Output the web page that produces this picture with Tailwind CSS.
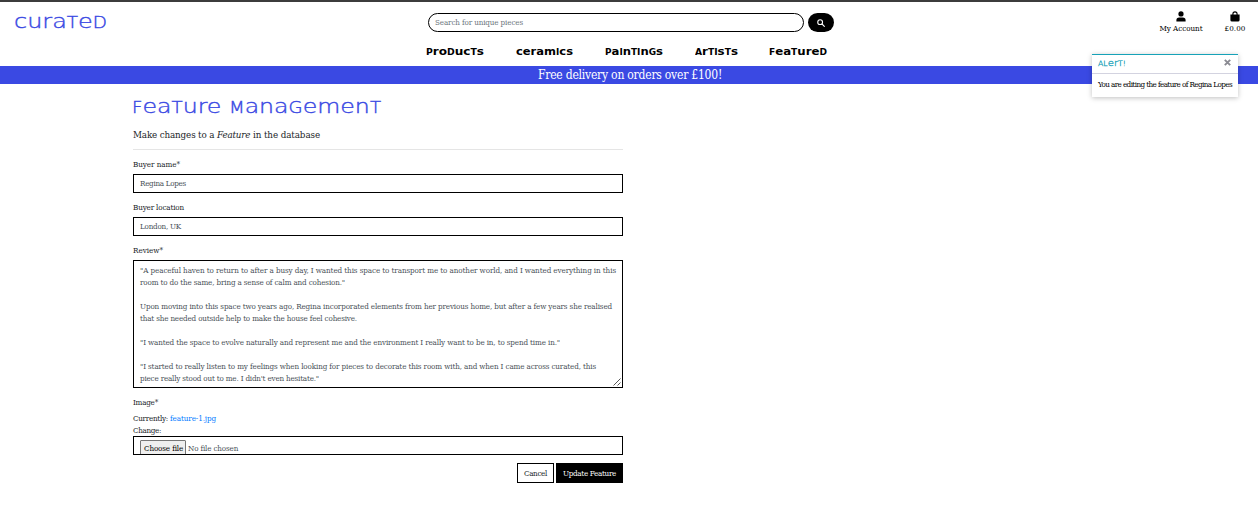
<!DOCTYPE html>
<html lang="en">
<head>
<meta charset="utf-8">
<title>curated</title>
<script src="https://cdn.jsdelivr.net/npm/@tailwindcss/browser@4"></script>
</head>
<body class="h-[510px] overflow-hidden border-t-2 border-[#3c3c3c] bg-white font-['DejaVu_Serif_Condensed','DejaVu_Serif',serif] text-[8px] leading-3 text-[#212529] [font-stretch:condensed]">
<header class="relative h-16">
  <div class="flex justify-between">
    <a class="ml-[14px] mt-[9px] h-5 w-[93px] whitespace-nowrap font-['DejaVu_Sans'] text-[20px] font-extralight leading-5 text-[#3a49e3] [-webkit-text-stroke:0.4px]"><span data-unicase data-stretch="93">curated</span></a>
    <div class="ml-[321px] mt-[11px] flex w-[406px] gap-1">
      <div class="flex h-[19px] w-[376px] items-center rounded-full border border-black pl-[6px] text-[#6c757d]"><span data-fit="88">Search for unique pieces</span></div>
      <button class="flex h-[19px] w-[26px] items-center justify-center rounded-full bg-black"><svg class="size-2" viewBox="0 0 16 16" fill="none" stroke="white" stroke-width="2.2" stroke-linecap="round"><circle cx="6.3" cy="6.3" r="4.8"/><path d="M10 10l4.7 4.7"/></svg></button>
    </div>
    <div class="ml-auto mr-[12px] mt-[9px] flex text-black">
      <a class="flex w-[44px] flex-col items-center"><svg class="h-[11px] w-[10px]" viewBox="0 0 10 11"><circle cx="5" cy="2.9" r="2.6"/><path d="M.4 10.5V9.2A2.8 2.8 0 0 1 3.2 6.4h3.6a2.8 2.8 0 0 1 2.8 2.8v1.3z"/></svg><span class="mt-px" data-fit="43">My Account</span></a>
      <a class="ml-[21px] flex w-[22px] flex-col items-center"><svg class="h-[11px] w-[10px]" viewBox="0 0 10 11"><path d="M.4 3.5h9.2v5.4a1.6 1.6 0 0 1-1.6 1.6H2A1.6 1.6 0 0 1 .4 8.900z"/><path d="M2.900 5V3a2.100 2.100 0 0 1 4.200 0v2" fill="none" stroke="black" stroke-width="1.100"/></svg><span class="mt-px" data-fit="21">£0.00</span></a>
    </div>
  </div>
  <nav class="absolute left-[426px] top-[42px] flex font-['DejaVu_Sans'] text-[10.5px] font-bold leading-[14px] text-black">
    <a class="w-[90px] whitespace-nowrap"><span data-unicase data-stretch="58">Products</span></a>
    <a class="w-[89px] whitespace-nowrap"><span data-unicase data-stretch="57">ceramics</span></a>
    <a class="w-[90px] whitespace-nowrap"><span data-unicase data-stretch="58">Paintings</span></a>
    <a class="w-[74px] whitespace-nowrap"><span data-unicase data-stretch="43">Artists</span></a>
    <a class="w-[58px] whitespace-nowrap"><span data-unicase data-stretch="58">Featured</span></a>
  </nav>
</header>
<div class="flex h-[18px] items-center justify-center bg-[#3a49e3] pl-[2px] text-[12px] text-white"><span data-fit="184">Free delivery on orders over £100!</span></div>

<main class="ml-[133px] w-[490px]">
  <h1 class="mt-3 h-5 whitespace-nowrap font-['DejaVu_Sans'] text-[20px] font-extralight leading-5 text-[#3a49e3] [-webkit-text-stroke:0.4px]"><span class="-ml-px" data-unicase data-stretch="249">Feature Management</span></h1>
  <p class="mt-3 flex h-[22px] border-b border-black/10 text-[9.75px] leading-[13px]"><span data-fit="84">Make changes to a&nbsp;</span><i data-fit="36">Feature&nbsp;</i><span data-fit="67">in the database</span></p>
  <label class="mt-2 block h-4 pt-px"><span data-fit="47">Buyer name*</span></label>
  <div class="flex h-[19px] items-center border border-black pl-1.5 pt-px text-[#495057]"><span data-fit="46">Regina Lopes</span></div>
  <label class="mt-2 block h-4 pt-px"><span data-fit="51">Buyer location</span></label>
  <div class="flex h-[19px] items-center border border-black pl-1.5 pt-px text-[#495057]"><span data-fit="41">London, UK</span></div>
  <label class="mt-2 block h-4 pt-px"><span data-fit="30">Review*</span></label>
  <div class="relative h-32 whitespace-nowrap border border-black pl-1.5 pt-[4px] text-[#495057]">
    <div class="h-3"><span data-fit="476">"A peaceful haven to return to after a busy day, I wanted this space to transport me to another world, and I wanted everything in this</span></div>
    <div class="h-6"><span data-fit="205">room to do the same, bring a sense of calm and cohesion."</span></div>
    <div class="h-3"><span data-fit="472">Upon moving into this space two years ago, Regina incorporated elements from her previous home, but after a few years she realised</span></div>
    <div class="h-6"><span data-fit="217">that she needed outside help to make the house feel cohesive.</span></div>
    <div class="h-6"><span data-fit="420">"I wanted the space to evolve naturally and represent me and the environment I really want to be in, to spend time in."</span></div>
    <div class="h-3"><span data-fit="456">"I started to really listen to my feelings when looking for pieces to decorate this room with, and when I came across curated, this</span></div>
    <div class="h-3"><span data-fit="179">piece really stood out to me. I didn't even hesitate."</span></div>
    <svg class="absolute bottom-px right-px size-2" viewBox="0 0 8 8" stroke="#444" stroke-width=".9"><path d="M.5 7.500l7-7M4.500 7.500l3-3"/></svg>
  </div>
  <label class="mt-2 block h-4 pt-px"><span data-fit="25">Image*</span></label>
  <div class="flex h-3 pt-px"><span data-fit="37">Currently:&nbsp;</span><a class="text-[#007bff]" data-fit="46">feature-1.jpg</a></div>
  <div class="h-3 pt-px"><span data-fit="28">Change:</span></div>
  <div class="flex h-[19px] overflow-hidden border border-black pl-1.5 pt-[3px] text-[#495057]">
    <div class="h-[18px] w-[46px] shrink-0 rounded-[1px] border border-[#767676] bg-[#efefef] pl-[3px] pt-[2px] text-black"><span data-fit="39">Choose file</span></div>
    <span class="ml-[2px] mt-[3px]" data-fit="50">No file chosen</span>
  </div>
  <div class="mt-2 flex justify-end gap-[2px]">
    <button class="flex h-5 w-[37px] items-center justify-center border border-black pt-px"><span data-fit="23">Cancel</span></button>
    <button class="flex h-5 w-[67px] items-center justify-center border border-black bg-black pt-px text-white"><span data-fit="53">Update Feature</span></button>
  </div>
</main>

<aside class="absolute left-[1092px] top-[54px] h-[43px] w-[146px] border-t border-[#17a2b8] bg-white shadow-[0_1px_5px_rgba(0,0,0,0.25)]">
  <div class="flex h-[19px] justify-between border-b border-[#d3d3e0] pl-1.5 pr-[7px] pt-px font-['DejaVu_Sans'] text-[9.5px] font-extralight leading-[14px] text-[#17a2b8] [-webkit-text-stroke:0.3px]"><span class="self-start" data-unicase data-stretch="28">Alert!</span><svg class="mt-[3px] size-[7px]" viewBox="0 0 7 7" stroke="#8a8a92" stroke-width="1.900"><path d="M.8.8l5.400 5.400M6.200.8L.8 6.200"/></svg></div>
  <p class="pl-1.5 pt-[5px] text-black"><span data-fit="134">You are editing the feature of Regina Lopes</span></p>
</aside>
<script>
  // Unicase display lettering: tall letters become capitals at x-height size
  document.querySelectorAll('[data-unicase]').forEach(el => {
    el.innerHTML = el.textContent.replace(/[A-Zpdtifglk!]/g, c => '<span class="text-[0.77em] uppercase">' + c + '</span>');
  });
  // Fit headings by stretching and copy by tracking; safe to run repeatedly
  function fitText() {
    document.querySelectorAll('[data-stretch]').forEach(el => {
      el.style.display = 'inline-block';
      el.style.transformOrigin = '0 50%';
      el.style.transform = 'none';
      el.style.transform = 'scaleX(' + el.dataset.stretch / el.getBoundingClientRect().width + ')';
    });
    document.querySelectorAll('[data-fit]').forEach(el => {
      el.style.display = 'inline-block';
      el.style.whiteSpace = 'nowrap';
      el.style.flexShrink = '0';
      el.style.letterSpacing = '0px';
      const range = document.createRange();
      range.selectNodeContents(el);
      const natural = range.getBoundingClientRect().width;
      el.style.letterSpacing = (el.dataset.fit - natural) / el.textContent.length + 'px';
    });
  }
  fitText();
  addEventListener('load', () => { fitText(); requestAnimationFrame(fitText); });
  new ResizeObserver(fitText).observe(document.querySelector('main'));
  document.fonts.ready.then(fitText);
</script>
</body>
</html>
